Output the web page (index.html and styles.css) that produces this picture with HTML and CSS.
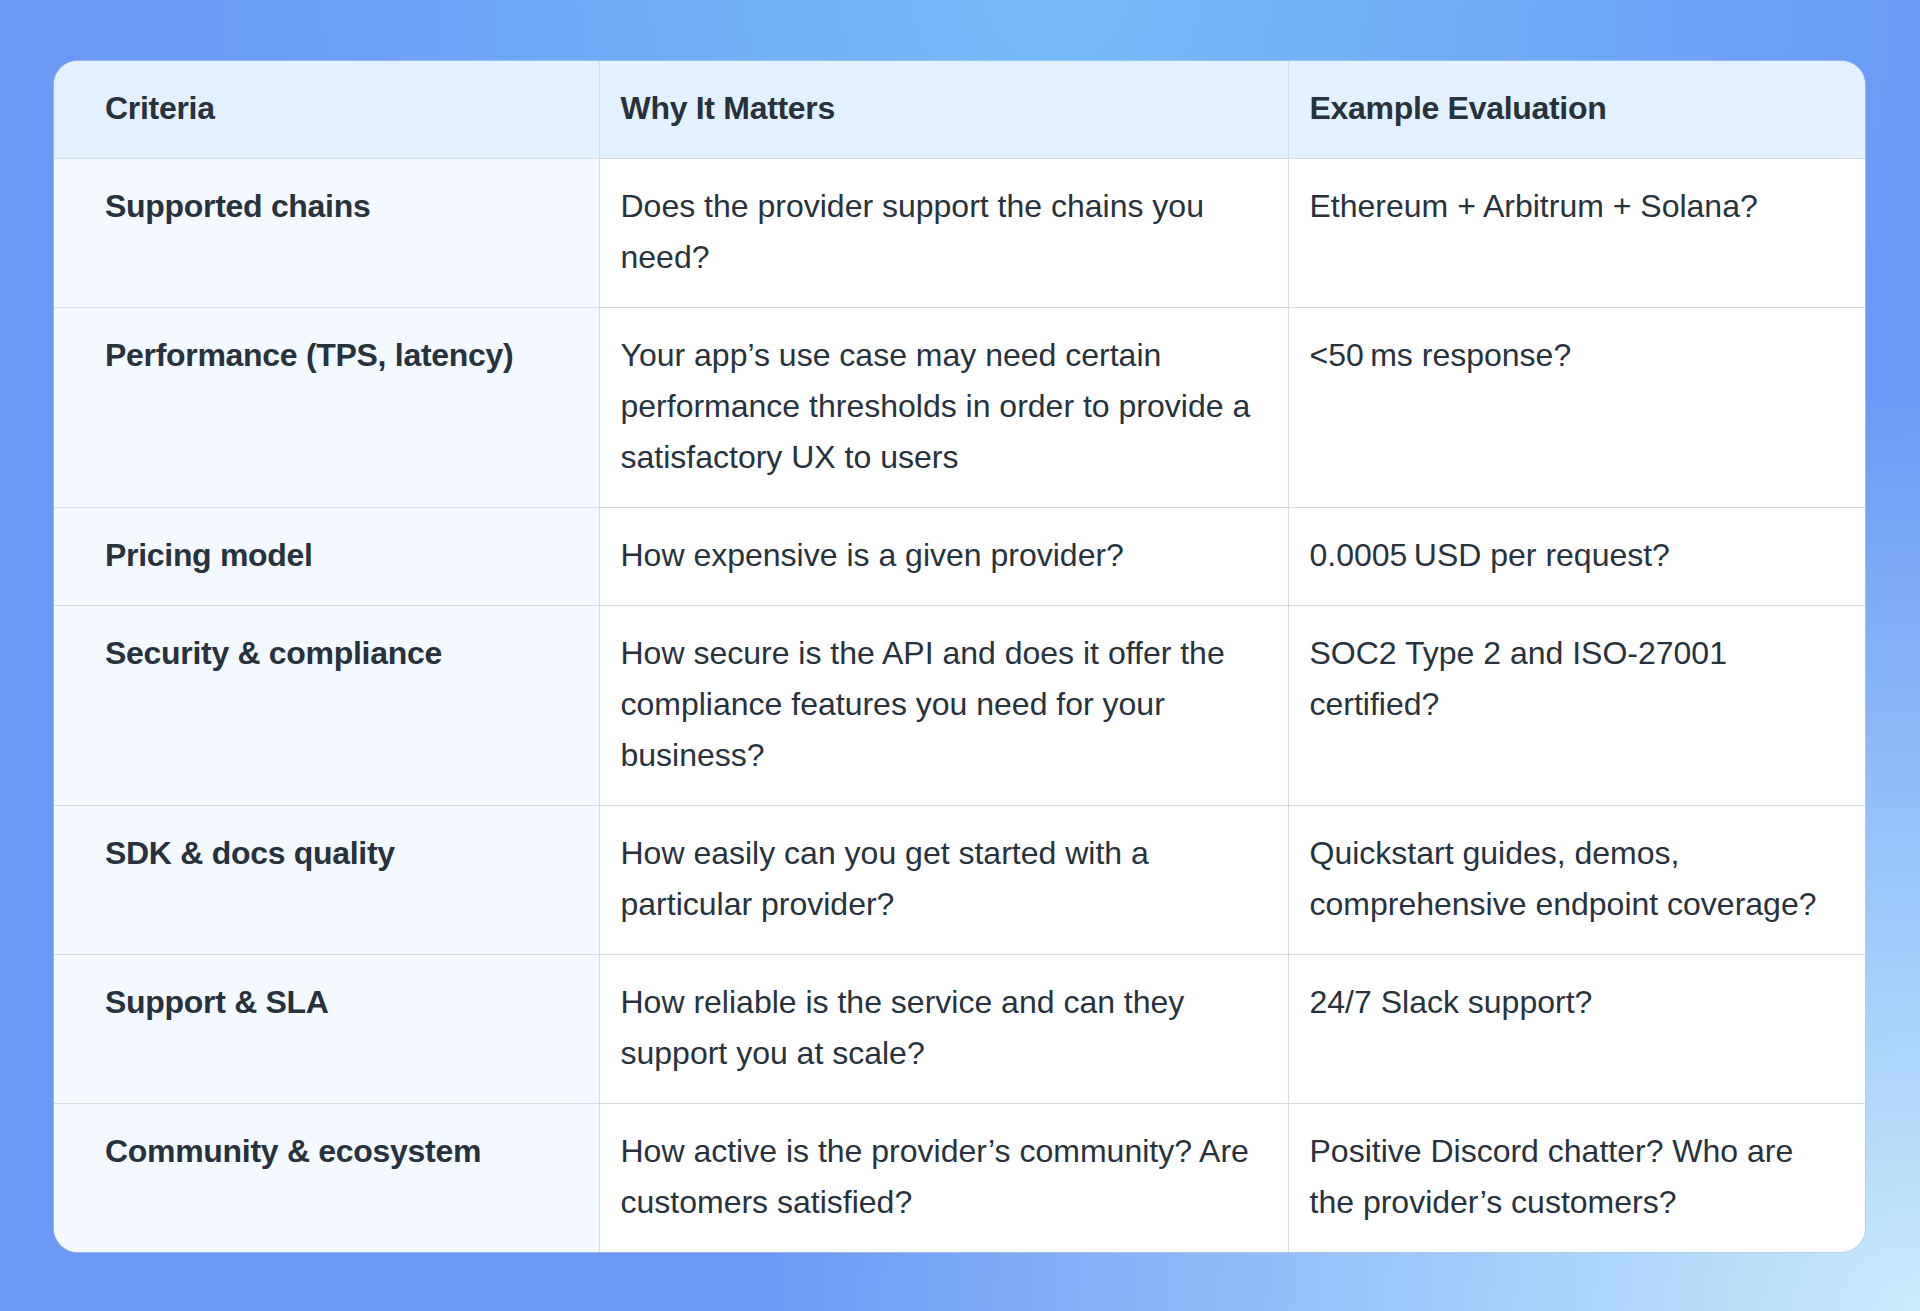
FILE: index.html
```html
<!DOCTYPE html>
<html lang="en">
<head>
<meta charset="utf-8">
<title>Provider evaluation criteria</title>
<link rel="stylesheet" href="styles.css">
</head>
<body>
<main class="page">
  <div class="card">
    <table class="grid">
      <colgroup>
        <col class="c1"><col class="c2"><col class="c3">
      </colgroup>
      <thead>
        <tr>
          <th>Criteria</th>
          <th>Why It Matters</th>
          <th>Example Evaluation</th>
        </tr>
      </thead>
      <tbody>
        <tr>
          <td>Supported chains</td>
          <td>Does the provider support the chains you need?</td>
          <td>Ethereum + Arbitrum + Solana?</td>
        </tr>
        <tr>
          <td>Performance (TPS, latency)</td>
          <td>Your app’s use case may need certain performance thresholds in order to provide a satisfactory UX to users</td>
          <td>&lt;50&thinsp;ms response?</td>
        </tr>
        <tr>
          <td>Pricing model</td>
          <td>How expensive is a given provider?</td>
          <td>0.0005&thinsp;USD per request?</td>
        </tr>
        <tr>
          <td>Security &amp; compliance</td>
          <td>How secure is the API and does it offer the compliance features you need for your business?</td>
          <td>SOC2 Type 2 and ISO-27001 certified?</td>
        </tr>
        <tr>
          <td>SDK &amp; docs quality</td>
          <td>How easily can you get started with a particular provider?</td>
          <td>Quickstart guides, demos, comprehensive endpoint coverage?</td>
        </tr>
        <tr>
          <td>Support &amp; SLA</td>
          <td>How reliable is the service and can they support you at scale?</td>
          <td>24/7 Slack support?</td>
        </tr>
        <tr>
          <td>Community &amp; ecosystem</td>
          <td>How active is the provider’s community? Are customers satisfied?</td>
          <td>Positive Discord chatter? Who are the provider’s customers?</td>
        </tr>
      </tbody>
    </table>
  </div>
</main>
</body>
</html>
```

FILE: styles.css
```css
html, body {
  margin: 0;
  padding: 0;
}

body {
  width: 1920px;
  height: 1311px;
  overflow: hidden;
  font-family: "Liberation Sans", Arial, sans-serif;
  color: #27323d;
  background:
    radial-gradient(ellipse 60% 70% at 100% 100%, #c8ecfc 0%, rgba(200, 236, 252, 0.6) 40%, rgba(200, 236, 252, 0) 100%),
    radial-gradient(ellipse 45% 60% at 55% 0%, #76bbf8 0%, rgba(118, 187, 248, 0) 100%),
    #6a9af6;
}

.page {
  padding: 61px 55px 0 54px;
}

.card {
  width: 1811px;
  border-radius: 24px;
  overflow: hidden;
  background: #ffffff;
  box-shadow: 0 0 0 1px rgba(180, 200, 225, 0.6);
}

.grid {
  width: 100%;
  border-collapse: collapse;
  table-layout: fixed;
  font-size: 32px;
  line-height: 51px;
  letter-spacing: 0;
}

.c1 { width: 545px; }
.c2 { width: 689px; }
.c3 { width: 577px; }

.grid th,
.grid td {
  text-align: left;
  vertical-align: top;
  padding: 22px 21px 24px 21px;
  border-left: 1px solid #d6dce3;
  border-top: 1px solid #d6dce3;
}

.grid th:first-child,
.grid td:first-child {
  border-left: none;
  padding-left: 51px;
}

.grid th:last-child,
.grid td:last-child {
  padding-right: 35px;
}

.grid thead th {
  border-top: none;
  background: #e3f1fe;
  font-weight: 700;
  letter-spacing: -0.3px;
}

.grid tbody td {
  font-weight: 400;
}

.grid tbody td:first-child {
  background: #f4f9ff;
  font-weight: 700;
  letter-spacing: -0.3px;
}
```
